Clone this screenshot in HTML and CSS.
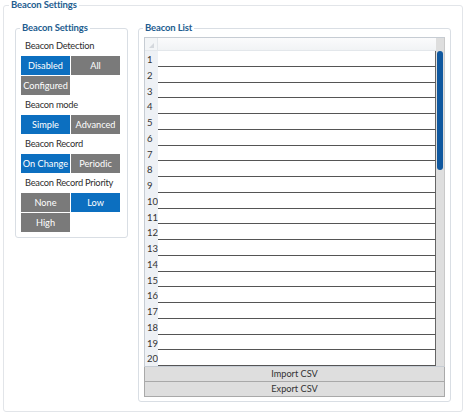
FILE: index.html
```html
<!DOCTYPE html>
<html>
<head>
<meta charset="utf-8">
<link rel="stylesheet" href="styles.css">
</head>
<body>
<div class="group outer">
  <span class="legend">Beacon Settings</span>
  <div class="outer-body">
    <div class="group settings">
      <span class="legend">Beacon Settings</span>
      <div class="label">Beacon Detection</div>
      <div class="btns">
        <span class="btn on">Disabled</span>
        <span class="btn">All</span>
        <span class="btn">Configured</span>
      </div>
      <div class="label">Beacon mode</div>
      <div class="btns">
        <span class="btn on">Simple</span>
        <span class="btn">Advanced</span>
      </div>
      <div class="label">Beacon Record</div>
      <div class="btns">
        <span class="btn on">On Change</span>
        <span class="btn">Periodic</span>
      </div>
      <div class="label">Beacon Record Priority</div>
      <div class="btns">
        <span class="btn">None</span>
        <span class="btn on">Low</span>
        <span class="btn">High</span>
      </div>
    </div>
    <div class="group list">
      <span class="legend">Beacon List</span>
      <div class="table">
        <div class="table-main">
          <div class="hnum"><span class="corner"></span></div>
          <div class="hcell"></div>
          <div class="num">1</div><div class="cell"></div>
          <div class="num">2</div><div class="cell"></div>
          <div class="num">3</div><div class="cell"></div>
          <div class="num">4</div><div class="cell"></div>
          <div class="num">5</div><div class="cell"></div>
          <div class="num">6</div><div class="cell"></div>
          <div class="num">7</div><div class="cell"></div>
          <div class="num">8</div><div class="cell"></div>
          <div class="num">9</div><div class="cell"></div>
          <div class="num">10</div><div class="cell"></div>
          <div class="num">11</div><div class="cell"></div>
          <div class="num">12</div><div class="cell"></div>
          <div class="num">13</div><div class="cell"></div>
          <div class="num">14</div><div class="cell"></div>
          <div class="num">15</div><div class="cell"></div>
          <div class="num">16</div><div class="cell"></div>
          <div class="num">17</div><div class="cell"></div>
          <div class="num">18</div><div class="cell"></div>
          <div class="num">19</div><div class="cell"></div>
          <div class="num">20</div><div class="cell"></div>
        </div>
        <div class="scroll"><div class="thumb"></div></div>
      </div>
      <div class="csv">Import CSV</div>
      <div class="csv">Export CSV</div>
    </div>
  </div>
</div>
</body>
</html>
```

FILE: styles.css
```css
* { box-sizing: border-box; }
html, body { margin: 0; padding: 0; background: #ffffff; }
body {
  font-family: "Lato", "Noto Sans", sans-serif;
  font-size: 9px;
  color: #333333;
  width: 474px;
  height: 420px;
  overflow: hidden;
}
.group {
  position: relative;
  border: 1px solid #d9dee4;
  border-radius: 3px;
}
.legend {
  position: absolute;
  top: -7px;
  left: 4px;
  padding: 0 2px;
  background: #ffffff;
  color: #235d8f;
  font-weight: 700;
  font-size: 9.5px;
  line-height: 12px;
  letter-spacing: -0.15px;
}
.outer {
  margin: 5px 0 0 3px;
  width: 460px;
  height: 407px;
  border-color: #e2e5e9;
  padding: 22px 10px 0 11px;
}
.outer > .legend { left: 5px; top: -7px; }
.outer-body {
  display: flex;
  gap: 10px;
  align-items: flex-start;
}
.settings {
  width: 113px;
  height: 210px;
  padding: 7px 0 0 5px;
}
.label {
  height: 20px;
  line-height: 20px;
  padding-left: 4px;
  color: #2e2e2e;
  white-space: nowrap;
  font-size: 9.3px;
  letter-spacing: -0.25px;
}
.btns {
  display: grid;
  grid-template-columns: 49px 49px;
  grid-auto-rows: 19px;
  gap: 1px 1px;
}
.btn {
  display: flex;
  align-items: center;
  justify-content: center;
  background: #7a7a7a;
  color: #ffffff;
  white-space: nowrap;
  font-size: 9.2px;
}
.btn.on { background: #0c6fc0; }
.list {
  width: 313px;
  height: 374px;
  padding: 8px 5px 0 5px;
}
.table {
  display: flex;
  height: 330px;
  border: 1px solid #c6ccd3;
  border-right-color: #c9c9c9;
}
.table-main {
  flex: 1;
  display: grid;
  grid-template-columns: 13px 1fr;
  grid-template-rows: 13px repeat(20, minmax(0, 1fr));
}
.hnum {
  background: #f3f5f7;
  border-right: 1px solid #e3e7eb;
  border-bottom: 1px solid #e3e7eb;
  position: relative;
}
.corner {
  position: absolute;
  right: 3px;
  bottom: 2px;
  width: 0;
  height: 0;
  border-left: 5px solid transparent;
  border-bottom: 5px solid #d4d8dd;
}
.hcell {
  background: linear-gradient(#fbfbfc, #f1f3f5);
  border-bottom: 1px solid #e3e7eb;
}
.num {
  background: #eef1f5;
  font-size: 9.5px;
  line-height: 14px;
  padding: 2px 0 0 2px;
  color: #333333;
  overflow: hidden;
}
.cell {
  background: #ffffff;
  border-bottom: 1px solid #555555;
  border-right: 1px solid #666666;
}
.scroll {
  width: 8px;
  background: #dedede;
  padding-top: 13px;
  padding-left: 1px;
}
.thumb {
  width: 6px;
  height: 119px;
  background: #10589f;
  border-radius: 3px;
}
.csv {
  height: 15px;
  line-height: 13px;
  text-align: center;
  background: #dedede;
  border: 1px solid #a9a9a9;
  border-top: none;
  color: #333333;
  font-size: 9.2px;
}
.csv:first-of-type { border-top: 1px solid #a9a9a9; }
```
